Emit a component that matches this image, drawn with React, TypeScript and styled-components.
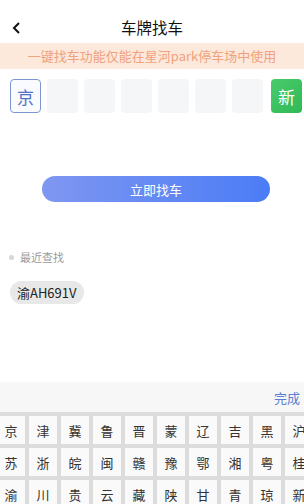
import React from 'react';
import styled, { createGlobalStyle } from 'styled-components';

const GlobalStyle = createGlobalStyle`
  html, body {
    margin: 0;
    padding: 0;
    background: #fff;
  }
  body {
    font-family: "Noto Sans CJK SC", "Noto Sans", sans-serif;
    overflow: hidden;
  }
`;

const Page = styled.div`
  width: 304px;
  height: 504px;
  overflow: hidden;
  display: flex;
  flex-direction: column;

  & > * {
    flex-shrink: 0;
  }
`;

const NavBar = styled.div`
  margin-top: 12px;
  height: 31px;
  display: flex;
  align-items: center;
  position: relative;
  justify-content: center;
`;

const BackButton = styled.div`
  position: absolute;
  left: 12px;
  top: 10px;
  width: 10px;
  height: 12px;
  display: flex;
`;

const Title = styled.div`
  font-size: 15.5px;
  line-height: 31px;
  color: #111;
`;

const Banner = styled.div`
  height: 26px;
  background: #fde8dc;
  color: #f0a27c;
  font-size: 13px;
  line-height: 26px;
  text-align: center;
  white-space: nowrap;
`;

const PlateRow = styled.div`
  margin-top: 10px;
  height: 34px;
  padding-left: 10px;
  display: flex;
  gap: 6px;
`;

const PlateBox = styled.div<{ $kind?: 'active' | 'empty' | 'green' }>`
  width: 31px;
  height: 34px;
  box-sizing: border-box;
  border-radius: 4px;
  display: flex;
  align-items: center;
  justify-content: center;
  font-size: 17px;
  background: ${({ $kind }) =>
    $kind === 'active'
      ? '#fafbff'
      : $kind === 'green'
      ? 'linear-gradient(135deg, #4acb6d, #2fb955)'
      : '#f5f6f8'};
  border: ${({ $kind }) => ($kind === 'active' ? '1px solid #7f97cf' : 'none')};
  color: ${({ $kind }) => ($kind === 'green' ? '#fff' : '#4f72c4')};
  margin-left: ${({ $kind }) => ($kind === 'green' ? '2px' : '0')};
`;

const FindButton = styled.div`
  margin: 63px 0 0 42px;
  width: 228px;
  height: 26px;
  border-radius: 13px;
  background: linear-gradient(90deg, #7f97f1, #4b7cf6);
  color: #fff;
  font-size: 13px;
  display: flex;
  align-items: center;
  justify-content: center;
`;

const RecentLabel = styled.div`
  margin: 48px 0 0 9px;
  display: flex;
  align-items: center;
  gap: 6px;
  font-size: 11px;
  color: #9a9a9a;
  line-height: 14px;
`;

const Dot = styled.span`
  width: 5px;
  height: 5px;
  border-radius: 50%;
  background: #d6d6d6;
`;

const Chips = styled.div`
  margin: 17px 0 0 10px;
  display: flex;
`;

const Chip = styled.div`
  height: 23px;
  padding: 0 7px;
  border-radius: 12px;
  background: #e8e8e8;
  color: #222;
  font-size: 13px;
  display: flex;
  align-items: center;
`;

const Keyboard = styled.div`
  margin-top: 78px;
  background: #dcdcdc;
`;

const KeyboardBar = styled.div`
  height: 30px;
  background: #f7f7f7;
  display: flex;
  align-items: center;
  justify-content: flex-end;
  padding-right: 4px;
`;

const DoneButton = styled.span`
  color: #5a7fd0;
  font-size: 13px;
`;

const KeyGrid = styled.div`
  margin-left: -3px;
  padding-top: 4px;
  display: grid;
  grid-template-columns: repeat(10, 28px);
  grid-auto-rows: 28px;
  gap: 4px;
`;

const Key = styled.div`
  background: #fafafa;
  color: #333;
  font-size: 13px;
  line-height: 1;
  display: flex;
  align-items: center;
  justify-content: center;
`;

const keys = [
  '京津冀鲁晋蒙辽吉黑沪',
  '苏浙皖闽赣豫鄂湘粤桂',
  '渝川贵云藏陕甘青琼新',
].join('').split('');

const App = () => (
  <Page>
    <GlobalStyle />
    <NavBar>
      <BackButton>
        <svg width="10" height="12" viewBox="0 0 10 12">
          <polyline points="7,1 2,6 7,11" fill="none" stroke="#111" strokeWidth="2" />
        </svg>
      </BackButton>
      <Title>车牌找车</Title>
    </NavBar>
    <Banner>一键找车功能仅能在星河park停车场中使用</Banner>
    <PlateRow>
      <PlateBox $kind="active">京</PlateBox>
      {[0, 1, 2, 3, 4, 5].map((i) => (
        <PlateBox key={i} $kind="empty" />
      ))}
      <PlateBox $kind="green">新</PlateBox>
    </PlateRow>
    <FindButton>立即找车</FindButton>
    <RecentLabel>
      <Dot />
      最近查找
    </RecentLabel>
    <Chips>
      <Chip>渝AH691V</Chip>
    </Chips>
    <Keyboard>
      <KeyboardBar>
        <DoneButton>完成</DoneButton>
      </KeyboardBar>
      <KeyGrid>
        {keys.map((k, i) => (
          <Key key={i}>{k}</Key>
        ))}
      </KeyGrid>
    </Keyboard>
  </Page>
);

export default App;
